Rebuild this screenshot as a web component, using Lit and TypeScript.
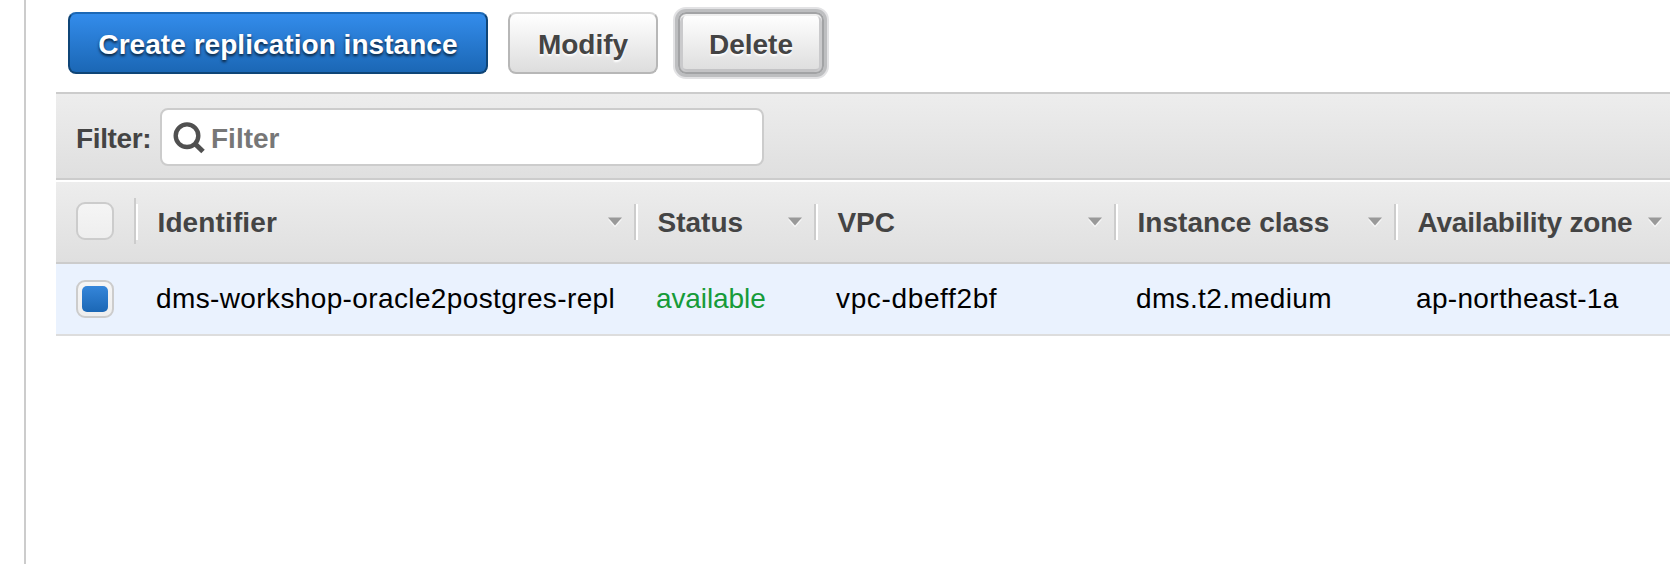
import { LitElement, html, css } from "lit";
import { customElement } from "lit/decorators.js";

interface Column {
  title: string;
  value: string;
  width: number;
  titleTracking: number;
  valueTracking: number;
  tone?: string;
}

const COLUMNS: Column[] = [
  { title: "Identifier", value: "dms-workshop-oracle2postgres-repl", width: 500, titleTracking: 0.12, valueTracking: 0.38 },
  { title: "Status", value: "available", width: 180, titleTracking: 0, valueTracking: -0.1, tone: "ok" },
  { title: "VPC", value: "vpc-dbeff2bf", width: 300, titleTracking: -0.1, valueTracking: 0.64 },
  { title: "Instance class", value: "dms.t2.medium", width: 280, titleTracking: 0.03, valueTracking: 0.35 },
  { title: "Availability zone", value: "ap-northeast-1a", width: 280, titleTracking: -0.2, valueTracking: 0.33 },
];

@customElement("app-root")
export class AppRoot extends LitElement {
  static styles = css`
    :host {
      display: block;
      box-sizing: border-box;
      width: 100%;
      height: 564px;
      padding-left: 24px;
      overflow: hidden;
      background: #fff;
      color: #444;
      font: 28px/32px "Liberation Sans", Arial, Helvetica, sans-serif;
    }
    * { box-sizing: border-box; }
    .panel {
      height: 100%;
      padding-left: 30px;
      border-left: 2px solid #ccc;
    }
    .actions {
      display: flex;
      gap: 20px;
      height: 92px;
      padding: 12px 0 0 12px;
    }
    button {
      height: 62px;
      margin: 0;
      padding: 4px 0 0;
      border: 2px solid #b7b7b7;
      border-top-color: #d8d8d8;
      border-radius: 8px;
      background: linear-gradient(#fff, #ddd);
      color: #444;
      font: bold 28px/32px "Liberation Sans", Arial, Helvetica, sans-serif;
      text-shadow: 0 2px 2px #fff;
      white-space: nowrap;
    }
    .create {
      width: 420px;
      border-color: #0f4577;
      border-top-color: #1c68b5;
      background: linear-gradient(#338ceb, #1b67b5);
      color: #fff;
      letter-spacing: 0.05px;
      text-shadow: 0 2px 3px rgba(0, 0, 0, 0.75);
    }
    .modify { width: 150px; }
    .delete {
      width: 146px;
      border-color: #a2a3a5;
      box-shadow: 0 0 0 3px #bdbec0, 0 0 0 5px #e2e2e4,
        inset 0 2px 0 #eee, inset 3px 0 0 #cacacc, inset -3px 0 0 #cacacc, inset 0 -3px 0 #c3c3c5;
    }
    .toolbar {
      display: flex;
      align-items: center;
      height: 88px;
      padding: 2px 0 0 20px;
      border: solid #ccc;
      border-width: 2px 0;
      background: linear-gradient(#ededed, #dfdfdf);
      font-weight: bold;
    }
    .label { width: 84px; padding-top: 4px; letter-spacing: -0.35px; }
    .search {
      display: flex;
      align-items: center;
      width: 604px;
      height: 58px;
      padding-left: 10px;
      border: 2px solid #ccc;
      border-radius: 8px;
      background: #fff;
      color: #777;
    }
    .glass { width: 34px; height: 34px; margin-right: 5px; }
    .hint { padding-top: 4px; }
    .head, .row { display: flex; align-items: center; }
    .head {
      height: 84px;
      border-top: 2px solid #fff;
      border-bottom: 2px solid #ccc;
      background: linear-gradient(#ededed, #dfdfdf);
      font-weight: bold;
    }
    .row {
      height: 72px;
      border-bottom: 2px solid #ddd;
      background: #eaf2fe;
      color: #000;
    }
    .pick { flex: none; width: 78px; padding-left: 20px; }
    .head .pick { padding-bottom: 2px; }
    .box {
      display: grid;
      place-items: center;
      width: 38px;
      height: 38px;
      border: 2px solid #ccc;
      border-radius: 9px;
      background: linear-gradient(#f5f5f5, #eee);
    }
    .mark {
      width: 26px;
      height: 26px;
      border-radius: 5px;
      background: linear-gradient(#3586da, #1b67b5);
    }
    .cell { flex: none; padding-left: 22px; white-space: nowrap; }
    .th {
      display: flex;
      flex: none;
      align-items: center;
      padding-right: 11px;
      white-space: nowrap;
    }
    .rule {
      flex: none;
      width: 4px;
      height: 36px;
      margin-right: 19.5px;
      background: linear-gradient(90deg, #ccc 50%, #fff 50%);
    }
    .th:nth-child(2) .rule {
      height: 46px;
      margin-bottom: 2px;
      background:
        linear-gradient(#ccc, #ccc) 0 0 / 2px 46px no-repeat,
        linear-gradient(#fff, #fff) 2px 6px / 2px 36px no-repeat;
    }
    .title { flex: 1; min-width: 0; padding-top: 2px; }
    .caret { flex: none; width: 16px; height: 14px; }
    .ok { color: #169b39; }
  `;

  render() {
    return html`
      <div class="panel">
        <div class="actions">
          <button class="create">Create replication instance</button>
          <button class="modify">Modify</button>
          <button class="delete">Delete</button>
        </div>
        <div class="toolbar">
          <span class="label">Filter:</span>
          <div class="search">
            <svg class="glass" viewBox="0 0 34 34" fill="none" stroke="#505050">
              <circle cx="15" cy="15.7" r="11.3" stroke-width="4.4" />
              <path d="M23 23.7L31 31.5" stroke-width="5" />
            </svg>
            <span class="hint">Filter</span>
          </div>
        </div>
        <div class="head">
          <div class="pick"><div class="box"></div></div>
          ${COLUMNS.map(
            (c) => html`<div class="th" style="width:${c.width}px">
              <span class="rule"></span><span class="title" style="letter-spacing:${c.titleTracking}px">${c.title}</span>
              <svg class="caret" viewBox="0 0 16 14">
                <path d="M1 4.5h14l-7 8z" fill="#f6f6f6" />
                <path d="M1 2.5h14l-7 8z" fill="#999" />
              </svg>
            </div>`
          )}
        </div>
        <div class="row">
          <div class="pick"><div class="box"><div class="mark"></div></div></div>
          ${COLUMNS.map(
            (c) => html`<div class="cell ${c.tone ?? ""}" style="width:${c.width}px;letter-spacing:${c.valueTracking}px">${c.value}</div>`
          )}
        </div>
      </div>
    `;
  }
}
